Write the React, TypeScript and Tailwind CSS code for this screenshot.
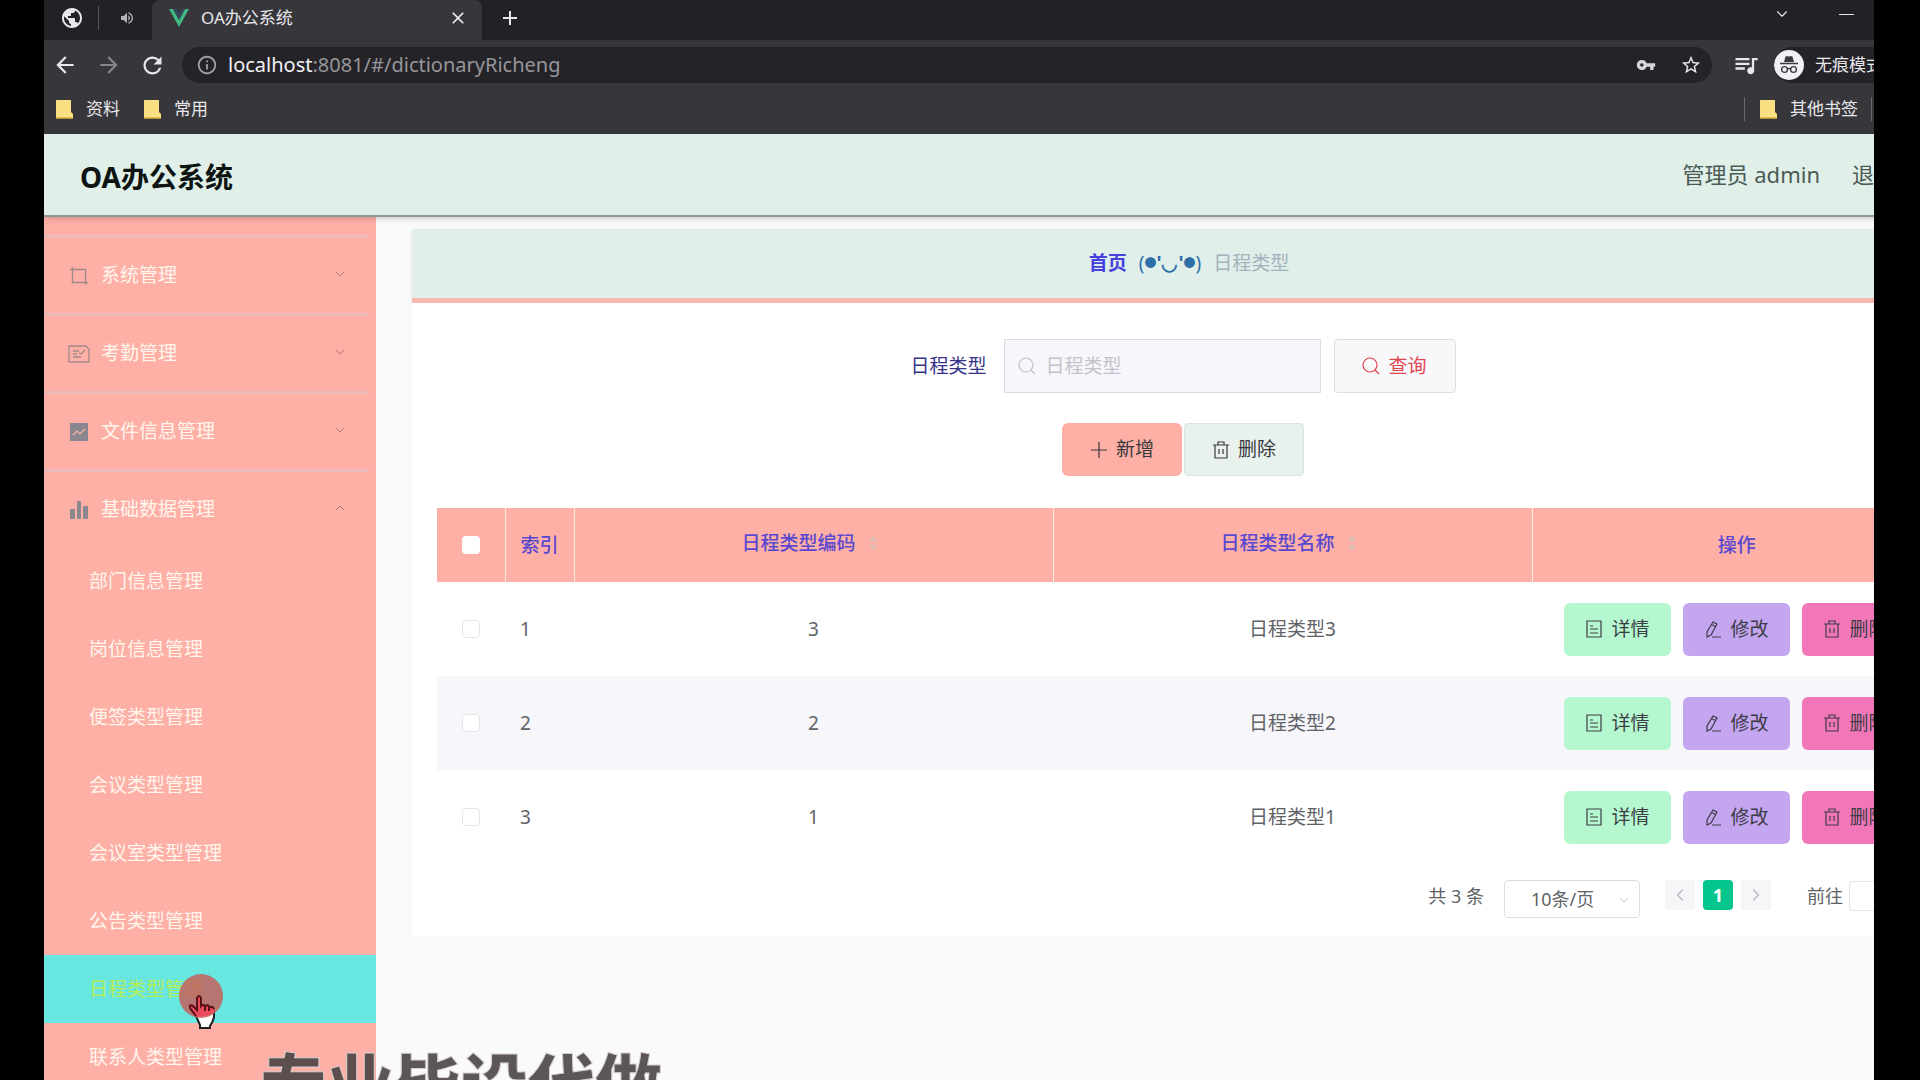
import type { ReactNode } from "react";
import {
  MdAdd,
  MdArrowBack,
  MdArrowForward,
  MdClose,
  MdInfoOutline,
  MdPublic,
  MdQueueMusic,
  MdRefresh,
  MdStarBorder,
  MdVolumeUp,
  MdVpnKey,
} from "react-icons/md";
import { ChevronDown, ChevronLeft, ChevronRight, ChevronUp } from "lucide-react";

const menus = [
  { title: "系统管理", icon: <CropIcon /> },
  { title: "考勤管理", icon: <PostcardIcon /> },
  { title: "文件信息管理", icon: <MarketingIcon /> },
  { title: "基础数据管理", icon: <BarsIcon />, open: true },
];

const subMenus = [
  "部门信息管理",
  "岗位信息管理",
  "便签类型管理",
  "会议类型管理",
  "会议室类型管理",
  "公告类型管理",
  "日程类型管理",
  "联系人类型管理",
];

const rows = [
  { index: 1, code: "3", name: "日程类型3" },
  { index: 2, code: "2", name: "日程类型2" },
  { index: 3, code: "1", name: "日程类型1" },
];

function CropIcon() {
  return (
    <svg viewBox="0 0 20 20" className="size-5" fill="none" stroke="#a08a8c" strokeWidth="1.4">
      <path d="M1 3.5h15.5V19M3.5 1v15.5H19" />
    </svg>
  );
}

function PostcardIcon() {
  return (
    <svg viewBox="0 0 22 18" className="h-[18px] w-[22px]" fill="none" stroke="#a08a8c" strokeWidth="1.3">
      <path d="M1 1h17l3 3v13H1zM5 6h6M5 9h4M5 12h8M11 8l2 1 4-4" />
    </svg>
  );
}

function MarketingIcon() {
  return (
    <svg viewBox="0 0 20 20" className="size-5">
      <path d="M1 1h18v18H1z" fill="#8b8790" />
      <path d="M4 13l4-4 3 3 5-5" fill="none" stroke="#ffb3a7" strokeWidth="1.2" />
    </svg>
  );
}

function BarsIcon() {
  return (
    <svg viewBox="0 0 20 20" className="size-5" fill="#8b8790">
      <rect x="1" y="9" width="5" height="10" rx="1" />
      <rect x="8" y="1" width="4" height="18" rx="1" />
      <rect x="14" y="6" width="5" height="13" rx="1" />
    </svg>
  );
}

function SearchIcon() {
  return (
    <svg viewBox="0 0 18 18" className="size-[18px]" fill="none" stroke="currentColor" strokeWidth="1.2">
      <circle cx="8" cy="8" r="7" />
      <path d="M13 13l4 4" />
    </svg>
  );
}

function TrashIcon() {
  return (
    <svg viewBox="0 0 18 18" className="size-[18px]" fill="none" stroke="currentColor" strokeWidth="1.2">
      <path d="M1 4h16M3 4v13h12V4M6 4V1h6v3M7 8v5M11 8v5" />
    </svg>
  );
}

function DocumentIcon() {
  return (
    <svg viewBox="0 0 18 18" className="size-[18px]" fill="none" stroke="currentColor" strokeWidth="1.2">
      <path d="M2 1h14v16H2zM5 6h3M5 9h8M5 13h8" />
    </svg>
  );
}

function EditIcon() {
  return (
    <svg viewBox="0 0 18 18" className="size-[18px]" fill="none" stroke="currentColor" strokeWidth="1.2">
      <path d="M9 2l4 2-6 11-4 2V12zM8 17h9M7.5 4.5l4 2" />
    </svg>
  );
}

function PlusIcon() {
  return (
    <svg viewBox="0 0 18 18" className="size-[18px]" fill="none" stroke="currentColor" strokeWidth="1.2">
      <path d="M9 1v16M1 9h16" />
    </svg>
  );
}

function FolderIcon() {
  return (
    <svg viewBox="0 0 17 20" className="h-5 w-[17px] shrink-0">
      <path d="M0 1h15v12l2 2v4H0z" fill="#fbe083" />
      <path d="M0 19h17" stroke="#e0b13c" strokeWidth="1.5" />
    </svg>
  );
}

function IncognitoIcon() {
  return (
    <svg viewBox="0 0 30 30" className="size-[30px] shrink-0">
      <circle cx="15" cy="15" r="15" fill="#f1f0f5" />
      <path d="M10 12l1.5-5.5 2-.5 1.5.7 1.5-.7 2 .5L20 12z" fill="#3a3940" />
      <path d="M6 13.5h18" stroke="#3a3940" strokeWidth="1.5" />
      <g fill="none" stroke="#3a3940" strokeWidth="1.4">
        <circle cx="10.5" cy="19.5" r="2.9" />
        <circle cx="19.5" cy="19.5" r="2.9" />
        <path d="M13.4 19q1.6-1 3.2 0" />
      </g>
    </svg>
  );
}

function BrowserBar() {
  return (
    <div className="bg-[#37363b] text-[#e8e8ec]">
      <div className="flex h-10 bg-[#222226]">
        <div className="flex w-[108px] items-center pb-1">
          <MdPublic className="ml-4 size-6" />
          <span className="ml-[14px] h-6 w-px bg-[#55555a]" />
          <MdVolumeUp className="ml-5 size-4 text-[#b5b5ba]" />
        </div>
        <div className="flex w-[330px] items-center rounded-t-lg bg-[#37363b] pr-[14px] pb-1 pl-[17px]">
          <svg viewBox="0 0 20 18" className="h-[18px] w-5">
            <path d="M0 0h4l6 11L16 0h4L10 18z" fill="#41b883" />
            <path d="M4 0h3.5L10 4.5 12.5 0H16l-6 11z" fill="#35495e" />
          </svg>
          <span className="ml-3 text-[17px]">OA办公系统</span>
          <button aria-label="关闭标签页" className="ml-auto">
            <MdClose className="size-5" />
          </button>
        </div>
        <button aria-label="新标签页" className="ml-4 pb-1">
          <MdAdd className="size-6" />
        </button>
        <div className="ml-auto flex items-start gap-12 pt-[5px] pr-5">
          <ChevronDown className="size-[18px]" strokeWidth={1.5} />
          <span className="mt-[9px] h-px w-[15px] bg-[#e8e8ec]" />
        </div>
      </div>
      <div className="flex h-[50px] items-center pl-2">
        <button aria-label="后退">
          <MdArrowBack className="size-[26px]" />
        </button>
        <button aria-label="前进" className="ml-[18px] text-[#85858a]">
          <MdArrowForward className="size-[26px]" />
        </button>
        <button aria-label="刷新" className="ml-[17px]">
          <MdRefresh className="size-[27px]" />
        </button>
        <div className="ml-4 flex h-9 flex-1 items-center rounded-full bg-[#242327] pr-[10px] pl-[14px]">
          <MdInfoOutline className="mr-[10px] size-[22px] text-[#a0a0a5]" />
          <span className="text-[20px] text-[#96969b]">
            <span className="text-[#f0f0f4]">localhost</span>:8081/#/dictionaryRicheng
          </span>
          <MdVpnKey className="ml-auto size-5 text-[#d5d5da]" />
          <MdStarBorder className="ml-6 size-[22px]" />
        </div>
        <MdQueueMusic className="ml-5 size-7" />
        <div className="ml-[14px] flex h-9 w-[100px] items-center gap-[11px] overflow-hidden rounded-l-full bg-[#242327] whitespace-nowrap">
          <IncognitoIcon />
          <span className="text-[17px]">无痕模式</span>
        </div>
      </div>
      <div className="flex h-11 items-center pb-[7px] pl-3 text-[17px]">
        <FolderIcon />
        <span className="ml-[13px]">资料</span>
        <span className="ml-6 flex">
          <FolderIcon />
        </span>
        <span className="ml-[13px]">常用</span>
        <span className="ml-auto h-6 w-px bg-[#6a6a70]" />
        <span className="ml-[15px] flex">
          <FolderIcon />
        </span>
        <span className="ml-[13px]">其他书签</span>
        <span className="mr-[2px] ml-[13px] h-6 w-px bg-[#6a6a70]" />
      </div>
    </div>
  );
}

function Sidebar() {
  return (
    <aside className="w-[332px] shrink-0 bg-[#ffb0a6] pt-[18px] text-[19px] text-[#fff6ee]">
      {menus.map((menu) => (
        <button
          key={menu.title}
          className="flex h-[78px] w-[325px] items-center border-t-3 border-[#ecbab8] pr-[21px] pl-[23px]"
        >
          <span className="flex w-6 justify-center">{menu.icon}</span>
          <span className="ml-[10px]">{menu.title}</span>
          <span className="mb-1 ml-auto text-[#b5737a]">
            {menu.open ? (
              <ChevronUp className="size-4" strokeWidth={1.5} />
            ) : (
              <ChevronDown className="size-4" strokeWidth={1.5} />
            )}
          </span>
        </button>
      ))}
      <nav>
        {subMenus.map((name) => (
          <a
            key={name}
            href="#"
            className={
              name === "日程类型管理"
                ? "flex h-[68px] items-center bg-[#68e6e0] pl-[45px] text-[#b5ee55]"
                : "flex h-[68px] items-center pl-[45px]"
            }
          >
            {name}
          </a>
        ))}
      </nav>
    </aside>
  );
}

function ActionButton({ className, children }: { className: string; children: ReactNode }) {
  return (
    <button
      className={`flex h-[53px] w-[107px] items-center justify-center gap-2 rounded-md text-[#3c3c46] ${className}`}
    >
      {children}
    </button>
  );
}

function SortCaret() {
  return (
    <svg viewBox="0 0 10 18" className="mr-2 ml-3 h-[18px] w-[10px]" fill="#d5bfb8">
      <path d="M5 2l4 5H1zM5 16l4-5H1z" />
    </svg>
  );
}

function DataTable() {
  return (
    <table className="w-full table-fixed border-collapse text-[19px] text-[#606266]">
      <colgroup>
        <col className="w-[68px]" />
        <col className="w-[69px]" />
        <col />
        <col />
        <col className="w-[409px]" />
      </colgroup>
      <thead>
        <tr className="h-[74px] bg-[#ffb0a6] text-[#5a48cf]">
          <th className="border-r border-[#fdeee0]">
            <input
              type="checkbox"
              aria-label="全选"
              className="mx-auto block size-[18px] appearance-none rounded-sm bg-white"
            />
          </th>
          <th className="border-r border-[#fdeee0] font-medium">索引</th>
          <th className="border-r border-[#fdeee0] font-medium">
            <span className="flex items-center justify-center pb-1">
              日程类型编码
              <SortCaret />
            </span>
          </th>
          <th className="border-r border-[#fdeee0] font-medium">
            <span className="flex items-center justify-center pb-1">
              日程类型名称
              <SortCaret />
            </span>
          </th>
          <th className="font-medium">操作</th>
        </tr>
      </thead>
      <tbody>
        {rows.map((row) => (
          <tr key={row.index} className="h-[94px] even:bg-[#f7f6fb]">
            <td>
              <input
                type="checkbox"
                aria-label={`选择第${row.index}行`}
                className="mx-auto block size-[18px] appearance-none rounded-sm border border-[#e6e4ea] bg-white"
              />
            </td>
            <td className="pl-[15px]">{row.index}</td>
            <td className="text-center">{row.code}</td>
            <td className="text-center">{row.name}</td>
            <td>
              <div className="flex justify-center gap-3">
                <ActionButton className="bg-[#b5f8cf]">
                  <DocumentIcon />
                  详情
                </ActionButton>
                <ActionButton className="bg-[#c4a5f0]">
                  <EditIcon />
                  修改
                </ActionButton>
                <ActionButton className="bg-[#f277b8]">
                  <TrashIcon />
                  删除
                </ActionButton>
              </div>
            </td>
          </tr>
        ))}
      </tbody>
    </table>
  );
}

function Pagination() {
  return (
    <div className="mt-4 flex items-start justify-end text-[18px] text-[#606266]">
      <span className="leading-8">共 3 条</span>
      <span className="relative ml-5">
        <select
          aria-label="每页条数"
          className="h-[38px] w-[136px] appearance-none rounded border border-[#dddce2] bg-white pl-[26px]"
        >
          <option>10条/页</option>
        </select>
        <ChevronDown className="absolute top-3 right-2 size-4 text-[#c0c4cc]" strokeWidth={1.5} />
      </span>
      <button aria-label="上一页" className="ml-[25px] flex h-[30px] w-[30px] items-center justify-center bg-[#f6f5f8] text-[#b8b8c0]">
        <ChevronLeft className="size-5" strokeWidth={1.5} />
      </button>
      <button className="ml-2 h-[30px] w-[30px] rounded-sm bg-[#04c68d] font-bold text-white">
        1
      </button>
      <button aria-label="下一页" className="ml-2 flex h-[30px] w-[30px] items-center justify-center bg-[#f6f5f8] text-[#b8b8c0]">
        <ChevronRight className="size-5" strokeWidth={1.5} />
      </button>
      <label className="ml-9 flex items-center leading-8">
        前往
        <input
          type="text"
          defaultValue="1"
          className="mx-[6px] h-[30px] w-[68px] rounded border border-[#e4e3e9] bg-white text-center"
        />
        页
      </label>
    </div>
  );
}

function Content() {
  return (
    <main className="flex-1 bg-[#fafafa] px-9 pt-3">
      <div className="flex h-[74px] items-center justify-center gap-3 border-b-[5px] border-[#fbb8b0] bg-[#e0efe9] text-[19px] shadow-sm">
        <a href="#" className="font-bold text-[#4640dd]">
          首页
        </a>
        <span className="flex items-center text-[#2f6fa8]">
          (<span className="text-xs">●</span>
          <span className="font-bold">'◡'</span>
          <span className="text-xs">●</span>)
        </span>
        <span className="text-[#a3b3bd]">日程类型</span>
      </div>
      <section className="bg-white px-[25px] pt-9 pb-[18px]">
        <form className="mr-3 flex items-center justify-center text-[19px]">
          <label htmlFor="type" className="text-[#35338a]">
            日程类型
          </label>
          <div className="ml-[17px] flex h-[54px] w-[317px] items-center gap-[10px] border border-[#dddce4] bg-[#f7f6fb] px-[13px] text-[#c0c0c8]">
            <SearchIcon />
            <input
              id="type"
              type="text"
              placeholder="日程类型"
              className="min-w-0 flex-1 bg-transparent outline-none placeholder:text-[#c4c3cb]"
            />
          </div>
          <button
            type="button"
            className="ml-[13px] flex h-[54px] w-[122px] items-center justify-center gap-2 rounded-sm border border-[#dfdde2] bg-[#f8f7f9] text-[#e0444f]"
          >
            <SearchIcon />
            查询
          </button>
        </form>
        <div className="mt-[30px] mr-3 flex justify-center gap-[2px] text-[19px] text-[#38383c]">
          <button className="flex h-[53px] w-[120px] items-center justify-center gap-2 rounded-md bg-[#ffb0a6]">
            <PlusIcon />
            新增
          </button>
          <button className="flex h-[53px] w-[120px] items-center justify-center gap-2 rounded-sm border border-[#dbe5e0] bg-[#e8f1ec]">
            <TrashIcon />
            删除
          </button>
        </div>
        <div className="mt-8">
          <DataTable />
        </div>
        <Pagination />
      </section>
    </main>
  );
}

// mouse highlight with the hand cursor
function Pointer() {
  return (
    <svg viewBox="0 0 46 56" className="absolute bottom-[50px] left-[178px] h-14 w-[46px]">
      <path
        d="M18 42l-6-8q-1-4 3-2l4 4V24q2-4 4 0v8q2-2 4 0 3-2 4 1 4-1 5 2v8q-1 5-4 9v2H22v-3z"
        fill="#fff"
        stroke="#1d1d22"
        strokeWidth="2"
      />
      <circle cx="23" cy="22" r="22" fill="#c4605c" fillOpacity="0.85" />
      <path
        d="M16 42l-4-8q-1-4 3-2l4 4V24q2-4 4 0v8q2-2 4 0 3-2 4 1 4-1 5 2v3q-8 6-20 4z"
        fill="#ea4a5c"
      />
      <path
        d="M18 42l-6-8q-1-4 3-2l4 4V24q2-4 4 0v8q2-2 4 0 3-2 4 1 4-1 5 2M27 32v5M31 33v4"
        fill="none"
        stroke="#5a1018"
        strokeWidth="2"
      />
    </svg>
  );
}

export default function App() {
  return (
    <div className="relative h-screen overflow-hidden bg-black pr-[46px] pl-11 font-['Noto_Sans','Noto_Sans_CJK_SC',sans-serif]">
      <div className="flex h-full flex-col overflow-hidden">
        <BrowserBar />
        <div className="flex w-[calc(100%+128px)] flex-1 flex-col">
          <header className="z-10 flex h-[83px] shrink-0 items-center justify-between border-b-2 border-[#8d9994] bg-[#e0f0e9] pr-[62px] pl-9 shadow-md">
            <h1 className="pt-1 text-[28px] font-bold text-[#0d1412]">OA办公系统</h1>
            <div className="flex gap-8 text-[22px] text-[#4a5a54]">
              <span>管理员 admin</span>
              <a href="#">退出登录</a>
            </div>
          </header>
          <div className="flex flex-1">
            <Sidebar />
            <Content />
          </div>
        </div>
      </div>
      <Pointer />
      <div className="absolute top-full left-[260px] -mt-[46px] text-[67px] font-black whitespace-nowrap text-[#4a4444]/90 [-webkit-text-stroke:1px_#d8d0d0]">
        专业毕设代做
      </div>
    </div>
  );
}
